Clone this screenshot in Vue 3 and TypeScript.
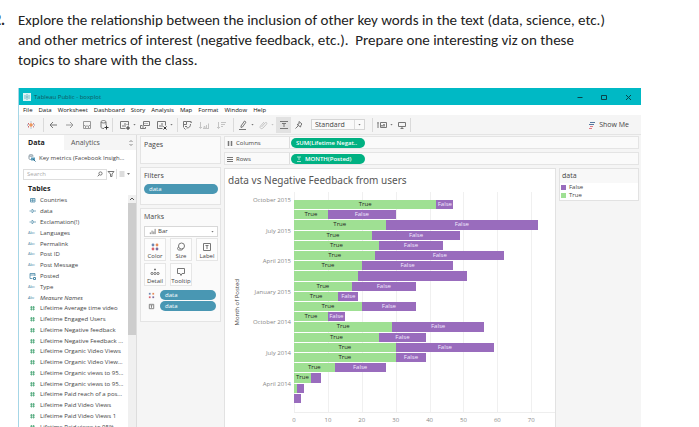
<script setup lang="ts">
import { ref } from 'vue'

interface Bar {
  yes: number
  total: number
  labels: number
}

const axisMax = 77
const menu: string[] = ['File', 'Data', 'Worksheet', 'Dashboard', 'Story', 'Analysis', 'Map', 'Format', 'Window', 'Help']

const dimensions: { name: string; icon: string; italic?: boolean }[] = [
  { name: 'Countries', icon: 'set' },
  { name: 'data', icon: 'bool' },
  { name: 'Exclamation(!)', icon: 'bool' },
  { name: 'Languages', icon: 'abc' },
  { name: 'Permalink', icon: 'abc' },
  { name: 'Post ID', icon: 'abc' },
  { name: 'Post Message', icon: 'abc' },
  { name: 'Posted', icon: 'date' },
  { name: 'Type', icon: 'abc' },
  { name: 'Measure Names', icon: 'abc', italic: true },
]

const measures: string[] = [
  'Lifetime Average time video',
  'Lifetime Engaged Users',
  'Lifetime Negative feedback',
  'Lifetime Negative Feedback ...',
  'Lifetime Organic Video Views',
  'Lifetime Organic Video View...',
  'Lifetime Organic views to 95...',
  'Lifetime Organic views to 95...',
  'Lifetime Paid reach of a pos...',
  'Lifetime Paid Video Views',
  'Lifetime Paid Video Views 1',
  'Lifetime Paid views to 95%',
]

const bars: Bar[] = [
  [42, 47, 2], [10, 30, 2], [27, 72, 2], [23, 49, 2], [25, 44, 2],
  [24, 62, 2], [20, 47, 2], [19, 51, 0], [17, 36, 2], [13, 19, 2],
  [20, 36, 2], [10, 15, 2], [29, 56, 2], [25, 39, 2], [30, 59, 2],
  [30, 39, 2], [12, 27, 2], [5, 8, 1], [1, 3, 0], [0, 2, 0],
].map(([yes, total, labels]) => ({ yes, total, labels }))

const months: string[] = ['October 2015', 'July 2015', 'April 2015', 'January 2015', 'October 2014', 'July 2014', 'April 2014']
const ticks: number[] = [0, 10, 20, 30, 40, 50, 60, 70]

const fit = ref('Standard')
const mark = ref('Bar')
const query = ref('')

const share = (value: number): string => `${(value / axisMax) * 100}%`
</script>

<template>
  <div class="page">
    <ol class="question">
      <li>
        <b>2.</b>
        <p>
          Explore the relationship between the inclusion of other key words in the text (data, science, etc.)<br />
          and other metrics of interest (negative feedback, etc.).&nbsp; Prepare one interesting viz on these<br />
          topics to share with the class.
        </p>
      </li>
    </ol>

    <section class="window">
      <header class="titlebar">
        <svg class="app-icon" viewBox="0 0 8 8"><rect width="8" height="8" fill="#d9f4f6" /><path d="M4 1v6M1 4h6M2 2v1M6 2v1M2 5v1M6 5v1" stroke="#5eaebb" stroke-width=".8" /></svg>
        <span class="caption">Tableau Public - boxplot</span>
        <button class="win" aria-label="Minimize"><svg viewBox="0 0 8 8"><path d="M1.500 4.500h5" /></svg></button>
        <button class="win" aria-label="Maximize"><svg viewBox="0 0 8 8"><path d="M1.500 2.500h5v4h-5z" /></svg></button>
        <button class="win" aria-label="Close"><svg viewBox="0 0 8 8"><path d="M2 2l5 5M7 2l-5 5" /></svg></button>
      </header>

      <nav class="menubar">
        <a v-for="item in menu" :key="item" href="#">{{ item }}</a>
      </nav>

      <div class="toolbar">
        <button class="tool start" aria-label="Start page">
          <svg viewBox="0 0 12 12"><path d="M6 4v4M4 6h4" stroke="#e8762c" /><path d="M6 2.500v1M6 8.500v1" stroke="#8095b5" /><path d="M3.500 4v1.500M3.500 7v1.500" stroke="#c9656d" /><path d="M8.500 4v1.500M8.500 7v1.500" stroke="#c98a95" /><path d="M2 6h1M9 6h1" stroke="#8095b5" /></svg>
        </button>
        <i class="sep"></i>
        <button class="tool" aria-label="Undo"><svg viewBox="0 0 12 12"><path d="M10 6H3M6 3L3 6l3 3" /></svg></button>
        <button class="tool faded" aria-label="Redo"><svg viewBox="0 0 12 12"><path d="M2 6h7M6 3l3 3-3 3" /></svg></button>
        <button class="tool faded" aria-label="Save"><svg viewBox="0 0 12 12"><path d="M2.500 2.500h7v7h-7zM4.500 9V7h3v2M3 6.500h1M8 6.500h1" /></svg></button>
        <button class="tool" aria-label="New data source"><svg viewBox="0 0 12 12"><path d="M3 3v5c0 1 1 1.500 3 1.500M3 3c0-2 5-2 5 0v3M3 3c0 1.300 5 1.300 5 0" /><path d="M8.500 6.500v4M6.500 8.500h4" stroke="#333" /></svg></button>
        <i class="sep"></i>
        <button class="tool first" aria-label="New worksheet"><svg viewBox="0 0 12 12"><path d="M6.500 9.500h-5v-7h8v4M4 8V6M6 8V4M8 6V5" /><path d="M9 7v4M7 9h4" stroke="#333" /></svg></button>
        <i class="caret"></i>
        <button class="tool" aria-label="Duplicate"><svg viewBox="0 0 12 12"><path d="M4.500 2.500h6v4h-6zM1.500 6.500v3h5V8M1.500 6.500h2M6 5V4M8 5V4M3 8h2" /></svg></button>
        <button class="tool" aria-label="Clear sheet"><svg viewBox="0 0 12 12"><path d="M6.500 9.500h-5v-7h8v4M4 8V6M6 8V4" /><path d="M7.500 7.500l3 3M10.500 7.500l-3 3" stroke="#333" /></svg></button>
        <i class="caret"></i>
        <i class="sep wide"></i>
        <button class="tool" aria-label="Swap"><svg viewBox="0 0 12 12"><path d="M2.500 8.500v-6h3v3h-3M5.500 2.500h4v1M9.500 5c0 2.500-1 4-4 4M4 7.500h2M9.500 2l1.200 1.800M4.500 10.500L3 9" /></svg></button>
        <button class="tool pale" aria-label="Sort ascending"><svg viewBox="0 0 12 12"><path d="M2.500 3v6M1 8l1.500 1.500L4 8M6 9.500h1v-2H6zM8.500 9.500V6M10.500 9.500v-5M5 9.500h6" /></svg></button>
        <button class="tool pale" aria-label="Sort descending"><svg viewBox="0 0 12 12"><path d="M3.500 3v6.500M2 8l1.500 1.500L5 8M6 3.500h5M6 5.500h4M6 7.500h2" /></svg></button>
        <i class="sep wide"></i>
        <button class="tool" aria-label="Highlight"><svg viewBox="0 0 12 12"><path d="M4 7l3.500-5L9 3.200 5.500 8 4 8.500zM2 10.500h7" stroke="#777" /></svg></button>
        <i class="caret"></i>
        <button class="tool pale" aria-label="Group"><svg viewBox="0 0 12 12"><path d="M4.500 8l3.500-4c1-1.500 2.500 0 1.500 1.200L6 9c-1.500 1.500-4 0-2.500-2L7 3" /></svg></button>
        <i class="caret light"></i>
        <button class="tool pressed" aria-label="Show mark labels"><svg viewBox="0 0 12 12"><path d="M2 2.500h8M2 9.500h8M4 4.500h4M6 4.500v3.500" /></svg></button>
        <button class="tool pin" aria-label="Fix axes"><svg viewBox="0 0 12 12"><path d="M6 2.500l3 2.500-1 1-.5 2L4 5.500 6 5zM5 7L2.500 9.500" /></svg></button>
        <label class="fit"><select v-model="fit" aria-label="Fit"><option>Standard</option></select><i class="caret"></i></label>
        <i class="sep"></i>
        <button class="tool" aria-label="Show cards"><svg viewBox="0 0 12 12"><path d="M2 3v6M1.500 4h1M4.500 3.500h6v5h-6z" /><path d="M6 7.500V6M8 7.500V5" stroke="#333" /></svg></button>
        <i class="caret"></i>
        <button class="tool" aria-label="Presentation mode"><svg viewBox="0 0 12 12"><path d="M2.500 3.500h7v4h-7zM6 7.500v2M4.500 9.500h3" /></svg></button>
        <i class="sep"></i>
        <button class="show-me">
          <svg viewBox="0 0 7 8"><path d="M1 1.500h5" stroke="#56779f" /><path d="M0 3.500h5" stroke="#56779f" /><path d="M1 5.500h3M0 7.500h3" stroke="#e27a85" /></svg>
          Show Me
        </button>
      </div>

      <div class="workspace">
        <aside class="data-pane">
          <div class="tabs">
            <button class="tab active">Data</button>
            <button class="tab">Analytics</button>
            <svg class="updown" viewBox="0 0 4 8"><path d="M.5 3L2 1.500 3.500 3M.5 5L2 6.500 3.500 5" /></svg>
          </div>
          <div class="source">
            <svg viewBox="0 0 8 8"><path d="M1 1.500v3c0 1 1 1 2 1M1 1.500c0-1 4-1 4 0v1M1 1.500c0 1 4 1 4 0" stroke="#8a9aa5" fill="none" /><path d="M3 3.500h4v3H3z" fill="#5b9cba" /><path d="M5 5l2.500 2.500" stroke="#31708e" /></svg>
            <span>Key metrics (Facebook Insigh...</span>
          </div>
          <div class="search">
            <div class="field">
              <input v-model="query" type="text" placeholder="Search" aria-label="Search" />
              <svg viewBox="0 0 6 6"><circle cx="3.500" cy="2.500" r="1.600" /><path d="M2.300 3.700L.7 5.300" /></svg>
            </div>
            <button aria-label="Filter fields"><svg viewBox="0 0 8 8"><path d="M1 1.500h6L5 4v2.500H3.500V4z" /></svg></button>
            <i class="vline"></i>
            <button aria-label="View options"><svg viewBox="0 0 8 8"><path d="M1.500 2h5M1.500 4h5M1.500 6h5" stroke="#bbb" /></svg></button>
            <i class="caret"></i>
          </div>
          <h2>Tables</h2>
          <div class="fields">
            <div class="lists">
              <ul class="dims">
                <li v-for="d in dimensions" :key="d.name" :class="{ italic: d.italic }">
                  <svg v-if="d.icon === 'set'" viewBox="0 0 8 8"><path d="M2 2.500h4.500v3.500H2zM2 4.200h4.500M4.200 2.500v3.500" stroke-width=".8" /></svg>
                  <svg v-else-if="d.icon === 'bool'" viewBox="0 0 8 8"><path d="M1 4h2M3.500 2.200v3.600L5.800 4zM6 4h1.500" stroke-width=".7" /></svg>
                  <svg v-else-if="d.icon === 'date'" viewBox="0 0 8 8"><path d="M4 6.500H1.500v-5h5V4M1.500 3h5" stroke-width=".8" /><path d="M5 5.500h2v2H5z" /></svg>
                  <span v-else class="abc">Abc</span>
                  <span>{{ d.name }}</span>
                </li>
              </ul>
              <ul class="meas">
                <li v-for="(m, i) in measures" :key="i">
                  <svg viewBox="0 0 9 8"><path d="M3.500 2v4.500M5.500 2v4.500M2 3.200h5M2 5.200h5" stroke-width=".7" /></svg>
                  <span>{{ m }}</span>
                </li>
              </ul>
            </div>
            <div class="scrollbar">
              <svg viewBox="0 0 8 8"><path d="M2 5l2-2 2 2" fill="none" stroke="#555" /></svg>
              <i></i>
            </div>
          </div>
        </aside>

        <div class="cards">
          <section class="card pages"><h3>Pages</h3></section>
          <section class="card filters">
            <h3>Filters</h3>
            <div class="pill blue">data</div>
          </section>
          <section class="card marks">
            <h3>Marks</h3>
            <label class="mark-type">
              <svg viewBox="0 0 8 8"><path d="M1.500 7V5M3.500 7V3M5.500 7V4M7 7V1" /></svg>
              <select v-model="mark" aria-label="Mark type"><option>Bar</option></select>
              <i class="caret"></i>
            </label>
            <div class="shelves">
              <button><svg viewBox="0 0 10 10"><circle cx="3" cy="3" r="1.400" fill="#6d86b0" /><circle cx="7" cy="3" r="1.400" fill="#e58a58" /><circle cx="3" cy="7" r="1.400" fill="#d9636b" /><circle cx="7" cy="7" r="1.400" fill="#7d6f9f" /></svg>Color</button>
              <button><svg class="line" viewBox="0 0 10 10"><circle cx="5.500" cy="4" r="3" /><path d="M3 5c-2 0-2 3 0 3h2.500c1 0 1.500-1 1-2" /></svg>Size</button>
              <button><svg class="line" viewBox="0 0 10 10"><path d="M1.500 1.500h7v7h-7zM3.500 3.500h3M5 3.500V7" /></svg>Label</button>
              <button><svg class="line" viewBox="0 0 10 10"><circle cx="2" cy="6.500" r="1.100" /><circle cx="5" cy="6.500" r="1.100" /><circle cx="8" cy="6.500" r="1.100" /><path d="M5 1.500v2M4 2.500h2" /></svg>Detail</button>
              <button><svg class="line" viewBox="0 0 10 10"><path d="M1.500 1.500h7v5H6L5 8.500l-1-2H1.500z" /></svg>Tooltip</button>
            </div>
            <div class="encoding">
              <svg viewBox="0 0 8 8"><rect x="1" y="1" width="2" height="2" fill="#6d86b0" /><rect x="5" y="1" width="2" height="2" fill="#e58a58" /><rect x="1" y="5" width="2" height="2" fill="#d9636b" /><rect x="5" y="5" width="2" height="2" fill="#7d6f9f" /></svg>
              <div class="pill blue">data</div>
            </div>
            <div class="encoding">
              <svg class="line" viewBox="0 0 8 8"><path d="M1.500 1.500h5v5h-5zM3 3h2M4 3v2.500" /></svg>
              <div class="pill blue">data</div>
            </div>
          </section>
        </div>

        <main class="sheet">
          <div class="shelf">
            <span class="shelf-name"><svg viewBox="0 0 6 6"><path d="M1.500 1v5M4.500 1v5" stroke-width="1.500" /></svg>Columns</span>
            <span class="pill green">SUM(Lifetime Negat..</span>
          </div>
          <div class="shelf">
            <span class="shelf-name"><svg viewBox="0 0 6 6"><path d="M0 1.500h6M0 3.500h6M0 5.500h6" /></svg>Rows</span>
            <span class="pill green"><svg viewBox="0 0 6 6"><path d="M1 1h4M1 5.500h4M3 1v3" /></svg>MONTH(Posted)</span>
          </div>
          <div class="lower">
            <section class="viz">
              <h1>data vs Negative Feedback from users</h1>
              <div class="chart">
                <div class="axis-title"><span>Month of Posted</span></div>
                <div class="months">
                  <span v-for="(m, i) in months" :key="m" :style="{ gridRow: i * 3 + 1 }">{{ m }}</span>
                </div>
                <div class="plot">
                  <div class="grid-lines">
                    <i v-for="t in ticks" :key="t" :style="{ width: share(10) }"></i>
                  </div>
                  <div class="bars">
                    <div v-for="(b, i) in bars" :key="i" class="bar">
                      <span class="true" :style="{ width: share(b.yes) }">{{ b.labels > 0 ? 'True' : '' }}</span>
                      <span class="false" :style="{ width: share(b.total - b.yes) }">{{ b.labels > 1 ? 'False' : '' }}</span>
                    </div>
                  </div>
                </div>
                <div class="ticks">
                  <span v-for="t in ticks" :key="t" :style="{ width: share(10) }"><b>{{ t }}</b></span>
                </div>
              </div>
            </section>
            <section class="legend">
              <h3>data</h3>
              <p><i class="false"></i>False</p>
              <p><i class="true"></i>True</p>
            </section>
          </div>
        </main>
      </div>
    </section>
  </div>
</template>

<style>
body { background: #fff; }
</style>

<style scoped>
* { box-sizing: border-box; margin: 0; }
.page { display: flex; flex-direction: column; height: 100vh; overflow: hidden; font-family: "Open Sans", "Noto Sans", sans-serif; font-size: 7px; line-height: 10px; color: #444; }
button { border: 0; background: none; padding: 0; font: inherit; color: inherit; }
select, input { font: inherit; color: inherit; border: 0; background: none; padding: 0; appearance: none; outline: none; min-width: 0; }
a { color: inherit; text-decoration: none; }
ul, ol { list-style: none; padding: 0; }
svg { display: block; flex: none; fill: none; stroke-width: 1; }
h1, h2, h3, p { font-weight: 400; font-size: inherit; }

.question { padding-top: 10px; height: 88px; flex: none; font: 15px/20px Carlito, Lato, sans-serif; color: #222; }
.question li { display: flex; }
.question b { width: 5px; margin-right: 13px; flex: none; display: flex; justify-content: flex-end; }
.question p { white-space: nowrap; }

.window { flex: 1; min-height: 0; margin: 0 58px 0 18px; display: flex; flex-direction: column; background: #f5f5f5; border-left: 1px solid #a6d6e6; }
.titlebar { display: flex; align-items: center; height: 17px; flex: none; background: #00b9c5; color: #13585f; padding: 0 1px 0 4px; font-size: 6px; }
.app-icon { width: 8px; height: 8px; margin-right: 3px; }
.caption { flex: 1; }
.win { width: 24px; height: 16px; display: flex; align-items: center; justify-content: center; }
.win svg { width: 8px; height: 8px; stroke: #08454b; }
.menubar { display: flex; gap: 6px; height: 10px; flex: none; background: #fff; padding: 0 4px; color: #111; font-size: 6px; line-height: 11px; }

.toolbar { display: flex; align-items: center; height: 20px; flex: none; border-bottom: 1px solid #e4e4e4; }
.tool { width: 17px; height: 16px; flex: none; display: flex; align-items: center; justify-content: center; }
.tool svg { width: 12px; height: 12px; stroke: #777; }
.tool.start { width: 24px; }
.tool.first { margin-left: 3px; }
.tool.faded svg { stroke: #999; }
.tool.pale svg { stroke: #c4c4c4; }
.tool.pressed { width: 15px; background: #e2e2e2; margin-left: 2px; }
.tool.pin { width: 15px; }
.sep { width: 1px; height: 14px; flex: none; background: #dadada; }
.sep.wide { margin-left: 4px; }
.caret { flex: none; width: 3px; height: 2px; background: #777; clip-path: polygon(0 0, 100% 0, 50% 100%); }
.caret.light { opacity: .4; }
.fit { display: flex; align-items: center; width: 54px; height: 11px; margin: 0 7px 0 5px; border: 1px solid #d5d5d5; background: #fafafa; flex: none; }
.fit select { flex: 1; height: 9px; line-height: 9px; padding-left: 3px; border-right: 1px solid #ddd; }
.fit .caret { margin: 0 3px; }
.show-me { display: flex; align-items: center; gap: 3px; margin: 0 12px 0 auto; }
.show-me svg { width: 7px; height: 8px; }

.workspace { flex: 1; min-height: 0; display: flex; gap: 3px; }
.data-pane { width: 118px; flex: none; background: #fff; border-right: 1px solid #ddd; display: flex; flex-direction: column; overflow: hidden; }
.tabs { display: flex; height: 15px; flex: none; background: #f5f5f5; }
.tab { padding: 0 7px; color: #555; }
.tab.active { width: 45px; padding: 0 0 0 9px; text-align: left; background: #fff; font-weight: 700; color: #222; }
.updown { width: 4px; height: 8px; margin: 4px 3px 0 auto; stroke: #888; }
.source { display: flex; align-items: center; gap: 3px; height: 17px; flex: none; padding: 0 0 1px 9px; white-space: nowrap; font-size: 6px; }
.source svg { width: 8px; height: 8px; }
.search { display: flex; align-items: center; height: 14px; flex: none; padding: 0 6px 0 4px; }
.field { display: flex; align-items: center; width: 84px; height: 11px; border: 1px solid #ddd; }
.field input { flex: 1; width: 60px; height: 9px; padding-left: 3px; font-size: 6px; }
.field input::placeholder { color: #aaa; opacity: 1; }
.field svg { width: 6px; height: 6px; margin-right: 3px; stroke: #777; }
.search button svg { width: 8px; height: 8px; stroke: #777; }
.vline { width: 1px; height: 10px; margin: 0 1px; background: #ddd; }
.search .caret { margin-left: auto; }
h2 { flex: none; height: 14px; padding: 3px 0 0 9px; font-weight: 700; color: #222; }
.fields { flex: 1; display: flex; min-height: 0; }
.lists { flex: 1; padding-left: 9px; font-size: 6px; overflow: hidden; white-space: nowrap; }
.lists ul { display: grid; grid-auto-rows: 1fr; }
.dims { height: 108px; color: #4b8aa8; }
.meas { height: 129px; color: #3fa06f; }
.lists li { display: flex; align-items: center; gap: 3px; }
.lists li svg { width: 9px; height: 8px; stroke: currentColor; }
.lists li span:last-child { color: #444; }
.abc { width: 9px; font-size: 4px; line-height: 8px; }
.italic { font-style: italic; }
.scrollbar { width: 8px; background: #f0f0f0; }
.scrollbar svg { width: 8px; height: 8px; }
.scrollbar i { display: block; height: 132px; background: #cdcdcd; }

.cards { width: 81px; flex: none; display: flex; flex-direction: column; gap: 3px; padding-top: 1px; }
.card { background: #fafafa; border: 1px solid #e4e4e4; padding: 2px 2px 0 3px; }
.card h3 { line-height: 12px; }
.pages { height: 28px; }
.filters { height: 38px; }
.marks { height: 114px; }
.filters .pill { margin-top: 2px; }
.pill { height: 10px; border-radius: 5px; color: #fff; line-height: 10px; padding-left: 5px; font-size: 6px; }
.blue { background: #4997b3; }
.green { display: flex; align-items: center; gap: 3px; width: 74px; background: #00b182; font-weight: 600; white-space: nowrap; }
.green svg { width: 6px; height: 6px; stroke: #a5e3d1; }
.mark-type { display: flex; align-items: center; height: 11px; margin-top: 3px; border: 1px solid #d8d8d8; background: #fff; padding: 0 3px 0 4px; gap: 2px; font-size: 6px; }
.mark-type svg { width: 7px; height: 7px; stroke: #777; }
.mark-type select { flex: 1; height: 9px; line-height: 9px; }
.shelves { display: grid; grid-template-columns: repeat(3, 1fr); gap: 2px 4px; margin: 1px 0 4px; }
.shelves button { display: flex; flex-direction: column; align-items: center; height: 23px; padding-top: 3px; border: 1px solid #e6e6e6; background: #fdfdfd; font-size: 6px; line-height: 8px; }
.shelves svg { width: 10px; height: 10px; flex: none; }
.line { stroke: #777; }
.encoding { display: flex; align-items: center; gap: 5px; padding: 0 2px 0 4px; margin-bottom: 1px; }
.encoding svg { width: 7px; height: 7px; }
.encoding .pill { flex: 1; }

.sheet { flex: 1; min-width: 0; display: flex; flex-direction: column; gap: 3px; padding: 1px 2px 0 0; }
.shelf { display: flex; align-items: center; height: 13px; flex: none; background: #fafafa; border: 1px solid #e4e4e4; }
.shelf-name { display: flex; align-items: center; gap: 3px; width: 65px; height: 11px; padding-left: 2px; margin-right: 1px; border-right: 1px solid #ddd; font-size: 6px; }
.shelf-name svg { width: 6px; height: 6px; stroke: #777; }
.lower { flex: 1; min-height: 0; display: flex; align-items: flex-start; gap: 3px; }
.viz { flex: 1; align-self: stretch; background: #fff; border: solid #e2e2e2; border-width: 1px 1px 0; overflow: hidden; }
h1 { height: 23px; padding: 0 0 0 3px; font-family: "Noto Sans", "Open Sans", sans-serif; font-size: 10px; line-height: 23px; color: #555; white-space: nowrap; }
.chart { display: grid; grid-template-columns: 12px 57px 1fr; grid-template-rows: 221px 13px; }
.axis-title { display: flex; align-items: center; justify-content: center; font-size: 6px; padding-left: 12px; color: #444; }
.axis-title span { writing-mode: vertical-rl; transform: rotate(180deg); white-space: nowrap; }
.months { display: grid; grid-template-rows: repeat(20, 1fr); height: 212px; padding-top: 8px; justify-items: end; padding-right: 3px; color: #888; font-size: 6px; }
.months span { height: 10px; margin-top: -5px; white-space: nowrap; }
.plot { display: grid; border-bottom: 1px solid #eee; }
.grid-lines, .bars { grid-area: 1 / 1; }
.grid-lines { display: flex; overflow: hidden; }
.grid-lines i { flex: none; border-left: 1px solid #f0f0f0; }
.bars { display: grid; grid-template-rows: repeat(20, 1fr); height: 212px; padding-top: 8px; }
.bar { display: flex; border-bottom: 1px solid transparent; min-height: 0; }
.bar span { overflow: hidden; text-align: center; line-height: 9px; font-size: 6px; }
.true { background: #9fe093; color: #222; }
.false { background: #996cbd; color: #f3eaff; }
.ticks { grid-column: 3; display: flex; color: #888; font-size: 6px; }
.ticks span { flex: none; }
.ticks b { display: block; width: 10px; margin-left: -5px; text-align: center; font-weight: 400; line-height: 14px; }

.legend { width: 80px; flex: none; height: 33px; background: #fff; border: 1px solid #e2e2e2; }
.legend h3 { height: 14px; line-height: 13px; padding-left: 2px; background: #f8f8f8; }
.legend p { display: flex; align-items: center; gap: 3px; height: 8px; padding-left: 1px; font-size: 6px; }
.legend i { width: 5px; height: 5px; }
</style>
